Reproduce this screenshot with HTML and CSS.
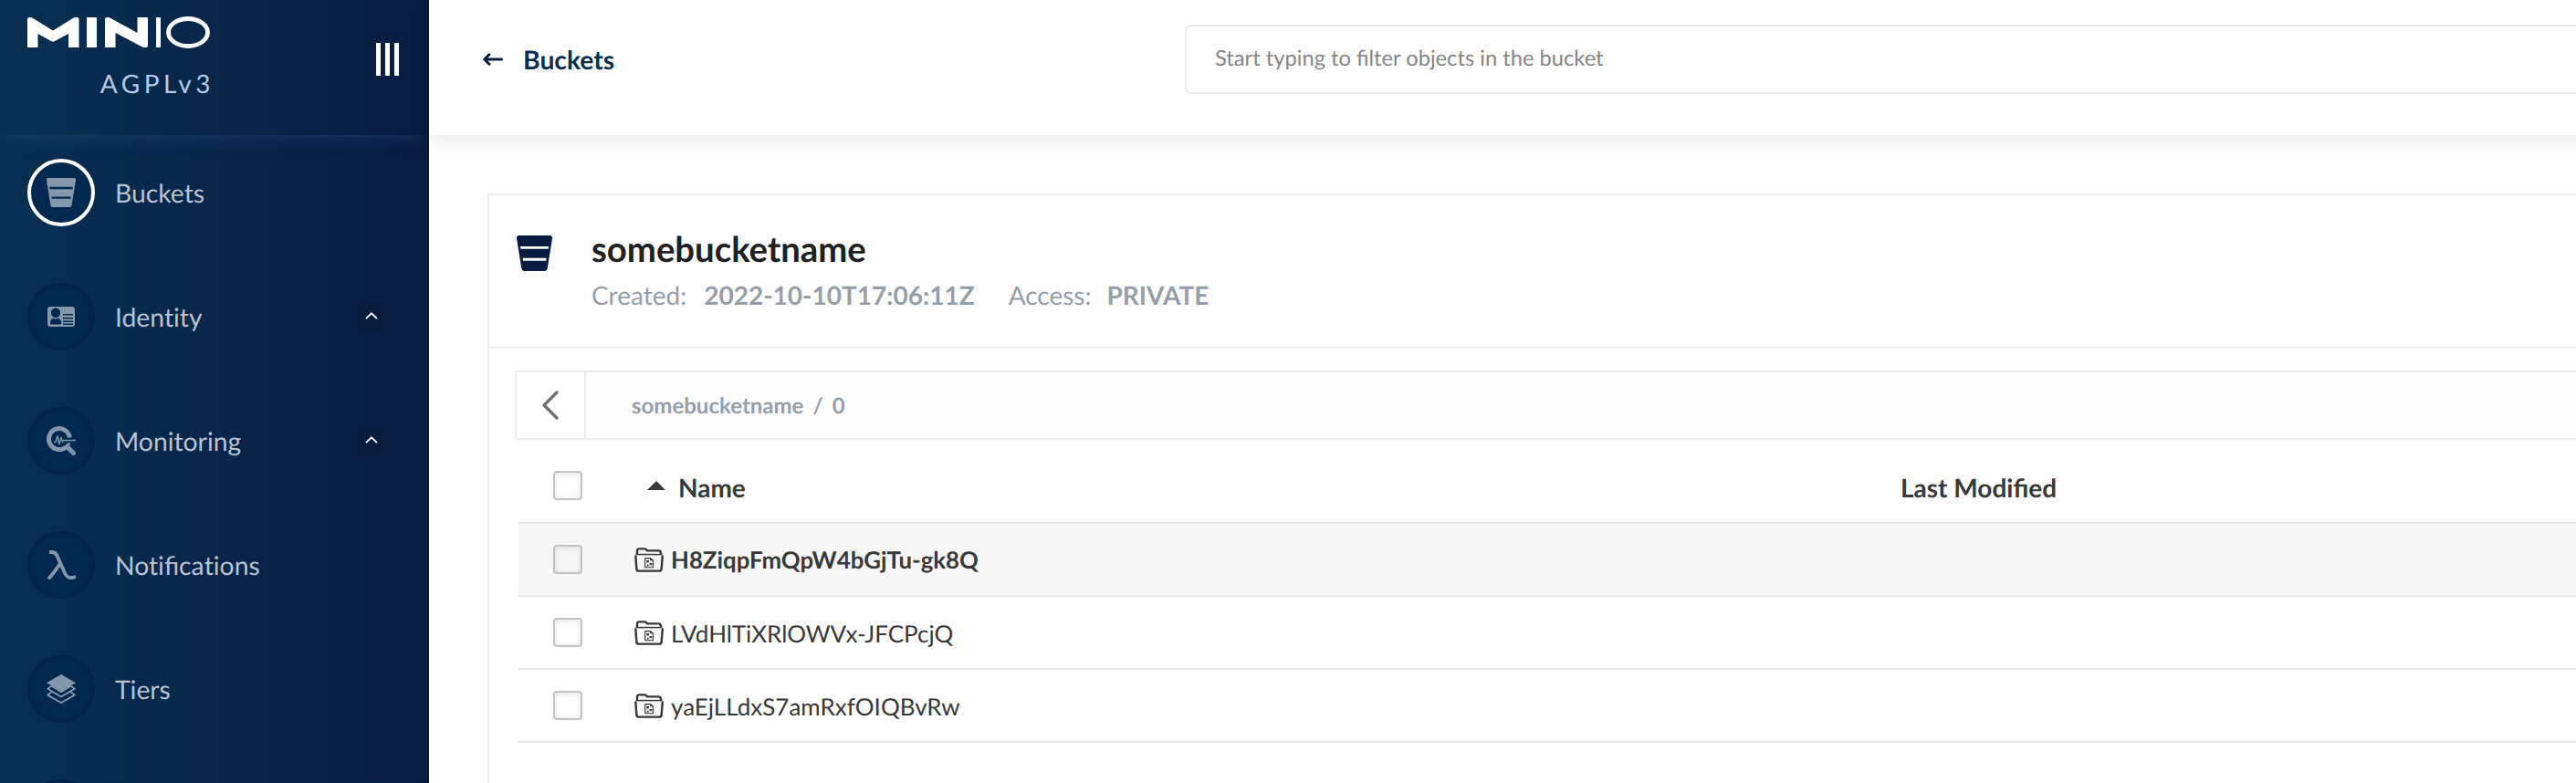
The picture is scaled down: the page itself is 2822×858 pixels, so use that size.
FILE: index.html
```html
<!DOCTYPE html>
<html lang="en">
<head>
<meta charset="utf-8">
<title>MinIO Console</title>
<link rel="stylesheet" href="styles.css">
</head>
<body>
<svg class="defs" width="0" height="0" aria-hidden="true">
  <symbol id="bucket" viewBox="0 0 32 32">
    <path fill="currentColor" fill-rule="evenodd" d="M2.2 0h27.6a2.2 2.2 0 0 1 2.2 2.6L27.6 30a2.4 2.4 0 0 1-2.4 2H6.8a2.4 2.4 0 0 1-2.4-2L0 2.6A2.2 2.2 0 0 1 2.2 0zM3.2 9.800l.4 2.400h24.800l.4-2.400zM5.400 20.400l.4 2.400h20.600l.4-2.400z"/>
  </symbol>
  <symbol id="chevron" viewBox="0 0 14 8">
    <path d="M1 7.200 7 1.300 13 7.200" fill="none" stroke="#fff" stroke-width="1.700"/>
  </symbol>
  <symbol id="folder" viewBox="0 0 30 27" preserveAspectRatio="none">
    <g fill="none" stroke="currentColor" stroke-linejoin="round">
      <path d="M2.800 8V4Q2.800 1.400 5 1.400H10.500Q12 1.400 12.500 2.600L13 3.300H24.500Q27.200 3.300 27.200 6V8" stroke-width="2.300"/>
      <path d="M1.200 8.500 2.200 23.500Q2.500 25.700 4.500 25.700H25.500Q27.500 25.700 27.800 23.500L28.900 8.500" stroke-width="2.300"/>
      <path d="M1.500 7.600H28.500" stroke-width="1.500"/>
      <path d="M11 11.600H16.500L19.200 14V21.800H11Z" stroke-width="1.100"/>
    </g>
    <path fill="currentColor" d="M12.500 14h2.500v2.500h-2.500zM15.500 17h2.500v2.200h-2.500zM12.300 20.500l1.500-2.500 1.500 2.500zM16 11.600v2.600h3z"/>
  </symbol>
</svg>
<div class="app">
  <aside class="sidebar">
    <div class="brand">
      <div class="brand-block">
        <svg class="logo" width="200" height="36" viewBox="0 0 200 36" fill="#fff">
          <path d="M0 34V3Q0 1 2 1H4.500L28 15.500 51.500 1H54Q56.500 1 56.500 3V34H45V19L30 27Q28 28 26 27L11.500 19V34Z"/>
          <path d="M65 1h11v33H65z"/>
          <path d="M85 34V3Q85 1 87 1H89.500L120.500 18V1H132V32Q132 34 130 34H127L96.500 18V34Z"/>
          <path d="M141 1h5v33h-5z"/>
          <ellipse cx="176" cy="17.500" rx="21.500" ry="15" fill="none" stroke="#fff" stroke-width="4.800"/>
        </svg>
        <span class="license">AGPLv3</span>
      </div>
      <div class="menu-toggle"><i></i><i></i><i></i></div>
    </div>
    <nav class="menu">
      <a class="item active"><span class="circle"><svg width="32" height="32"><use href="#bucket"/></svg></span><span class="label">Buckets</span></a>
      <a class="item"><span class="circle"><svg width="32" height="32" viewBox="0 0 32 32"><path fill="currentColor" fill-rule="evenodd" d="M4 5H28Q31 5 31 8V24Q31 27 28 27H4Q1 27 1 24V8Q1 5 4 5ZM10 6.500A5 5.200 0 0 0 10 17A5 5.200 0 0 0 10 6.500ZM4 22.500Q4 24.500 5 24.500H15Q16.200 24.500 16.200 22.500Q15.800 18.500 12.500 17.800Q10 19 7.500 17.800Q4.500 18.500 4 22.500ZM18 13V14.600H29V13ZM18 17V18.600H29V17ZM18 20.500V22H29V20.500ZM18 23.500V25H29V23.500Z"/></svg></span><span class="label plain">Identity</span><span class="expand"><svg width="14" height="8"><use href="#chevron"/></svg></span></a>
      <a class="item"><span class="circle"><svg width="32" height="32" viewBox="0 0 32 32" fill="none" stroke="currentColor"><path d="M25.400 12.500A11.500 11.500 0 1 0 21.500 22.800" stroke-width="5"/><path d="M8 17.500H10L12 10.500 13.800 20 16 12.500 17.500 17 18.500 15.500H32" stroke-width="1.400"/><path d="M22.500 19.500H26" stroke-width="2.500"/><path d="M22.500 22.500 29.500 29.500" stroke-width="5" stroke-linecap="round"/></svg></span><span class="label plain">Monitoring</span><span class="expand"><svg width="14" height="8"><use href="#chevron"/></svg></span></a>
      <a class="item"><span class="circle"><svg width="32" height="32" viewBox="0 0 32 32" fill="none" stroke="currentColor" stroke-width="3.800"><path d="M3 2H6Q10 2 12 7L20 25Q22.500 30 26 30Q29 30 32 29"/><path d="M15.500 13.500Q11 21 2 31.500"/></svg></span><span class="label"><span class="plain">Not</span>ifica<span class="plain">tions</span></span></a>
      <a class="item"><span class="circle"><svg width="32" height="32" viewBox="0 0 32 32"><path fill="currentColor" d="M16 0 32 9.200 16 18.300 0 9.200Z"/><path fill="none" stroke="currentColor" stroke-width="1.800" stroke-linejoin="round" d="M5.500 12.800 1.200 15.800 16 24.500 30.800 15.800 26.500 12.800 16 19.300ZM5.500 19.600 1.200 22.600 16 31 30.800 22.600 26.500 19.600"/></svg></span><span class="label">Tiers</span></a>
      <a class="item"><span class="circle"></span></a>
    </nav>
  </aside>
  <main class="main">
    <header class="topbar">
      <a class="back">
        <svg width="22" height="14" viewBox="0 0 22 14" fill="none" stroke="#081c42" stroke-linecap="round" stroke-linejoin="round"><path d="M3 7H20.500" stroke-width="3"/><path d="M7 1.800 1.800 7 7 12.200" stroke-width="3"/></svg>
        <span>Buckets</span>
      </a>
      <div class="search"><span>Start typing to filter objects in the bucket</span></div>
    </header>
    <section class="panel">
      <div class="panel-head">
        <svg class="bucket-icon" width="39" height="39"><use href="#bucket"/></svg>
        <div>
          <h1>somebucketname</h1>
          <p class="meta"><span>Created:</span><b>2022-10-10T17:06:11Z</b><span class="access">Access:</span><b class="private">PRIVATE</b></p>
        </div>
      </div>
      <div class="crumbs">
        <span class="crumb-back"><svg width="18" height="32" viewBox="0 0 18 32" fill="none" stroke="#707070" stroke-width="3.400" stroke-linecap="round" stroke-linejoin="round"><path d="M16 2 2 16 16 30"/></svg></span>
        <span class="crumb-path"><span>somebucketname</span><span>/</span><span>0</span></span>
      </div>
      <div class="table">
        <div class="row head"><span class="check"></span><span class="name"><i class="sort"></i>Name</span><span class="modified">Last Modified</span></div>
        <div class="row hover"><span class="check"></span><span class="name"><svg width="32" height="27"><use href="#folder"/></svg><span>H8ZiqpFmQpW4bGjTu-gk8Q</span></span></div>
        <div class="row"><span class="check"></span><span class="name"><svg width="32" height="27"><use href="#folder"/></svg><span>LVdHlTiXRlOWVx-JFCPcjQ</span></span></div>
        <div class="row"><span class="check"></span><span class="name"><svg width="32" height="27"><use href="#folder"/></svg><span>yaEjLLdxS7amRxfOIQBvRw</span></span></div>
      </div>
    </section>
  </main>
</div>
</body>
</html>
```
FILE: styles.css
```css
* { box-sizing: border-box; }
body { margin: 0; font-family: Lato, sans-serif; color: #393939; background: #fff; overflow: hidden; text-rendering: geometricPrecision; }
svg { display: block; flex: none; }
.defs { position: absolute; }
.app { display: flex; width: 2822px; height: 858px; overflow: hidden; }

.sidebar { width: 470px; flex: none; height: 858px; overflow: hidden; background: linear-gradient(90deg, #073052 0%, #081c42 100%); }
.brand { height: 148px; display: flex; justify-content: space-between; align-items: flex-start; padding: 18px 33px 0 30px; box-shadow: 0 6px 20px -8px rgba(60, 90, 150, .55); }
.brand-block { width: 200px; display: flex; flex-direction: column; align-items: flex-end; }
.license { margin-top: 20px; margin-right: -5px; font-size: 28px; line-height: 34px; letter-spacing: 4.500px; color: #b5c9e8; }
.menu-toggle { display: flex; gap: 5px; margin-top: 29px; }
.menu-toggle i { width: 5px; height: 36px; background: #fff; }
.menu { display: flex; flex-direction: column; gap: 62px; padding: 26px 48px 0 30px; }
.item { display: flex; align-items: center; height: 74px; flex: none; }
.circle { width: 74px; height: 74px; flex: none; border: 4px solid #02234a; border-radius: 50%; background: #01284f; display: flex; align-items: center; justify-content: center; color: #8399ab; }
.active .circle { border-color: #fff; }
.label { margin-left: 22px; margin-top: 2px; font-size: 28.3px; line-height: 34px; color: #b9c4d0; }
.plain { font-variant-ligatures: no-common-ligatures; }
.expand { width: 30px; height: 30px; margin-left: auto; margin-top: -1px; border-radius: 4px; background: #081c3b; display: flex; align-items: center; justify-content: center; }
.expand svg { margin-top: -2px; }

.main { flex: 1; min-width: 0; }
.topbar { height: 148px; margin-right: -40px; display: flex; align-items: flex-start; box-shadow: 0 6px 20px rgba(0, 0, 0, .09); }
.back { width: 828px; flex: none; display: flex; align-items: center; gap: 22px; padding: 48px 0 0 59px; font-size: 28.3px; line-height: 37px; font-weight: 700; color: #073052; }
.back svg { margin-top: -4px; }
.search { flex: 1; height: 76px; margin-top: 27px; border: 2px solid #eaeded; border-radius: 6px; padding: 0 31px; font-size: 23.7px; line-height: 71px; color: #868686; }

.panel { margin: 64px 0 0 64px; height: 660px; border: 2px solid #eaeded; border-right: 0; }
.panel-head { height: 168px; border-bottom: 2px solid #eaeded; display: flex; gap: 43px; padding: 34px 0 0 30px; }
.bucket-icon { margin-top: 10px; color: #081c42; }
h1 { margin: 0; font-size: 38.3px; line-height: 50px; font-weight: 700; color: #212121; }
.meta { margin: 7px 0 0; display: flex; font-size: 28px; line-height: 36px; color: #969fa8; }
.meta b { margin-left: 19px; }
.meta .private { margin-left: 17px; }
.access { margin-left: 37px; }
.crumbs { margin: 24px 0 0 28px; height: 76px; display: flex; border: 2px solid #eaeded; border-right: 0; background: #fcfcfc; }
.crumb-back { width: 76px; border-right: 2px solid #eaeded; background: #fff; display: flex; align-items: center; justify-content: center; }
.crumb-path { display: flex; gap: 10px; padding-left: 50px; font-size: 24px; font-weight: 700; line-height: 73px; color: #969fa8; }

.table { margin-left: 32px; }
.row { height: 80px; display: flex; align-items: center; border-bottom: 2px solid #e5e7e7; }
.row.head { height: 92px; font-size: 28px; font-weight: 700; }
.row.hover { background: #f7f7f7; font-weight: 700; }
.check { width: 32px; height: 32px; margin-left: 38px; flex: none; border: 2px solid #c3c3c3; border-radius: 4px; box-shadow: inset 0 1px 6px rgba(0, 0, 0, .12); }
.head .check { margin-top: 10px; }
.name { margin-left: 57px; width: 1387px; flex: none; display: flex; align-items: center; font-size: 26px; line-height: 34px; }
.hover .name { font-size: 25.8px; }
.name svg { margin-right: 8px; }
.name span { margin-top: 2px; }
.head .name, .modified { font-size: 28px; margin-top: 14px; }
.sort { margin: -4px 14px 0 14px; border: 10px solid transparent; border-top: 0; border-bottom: 10px solid #393939; }
```
